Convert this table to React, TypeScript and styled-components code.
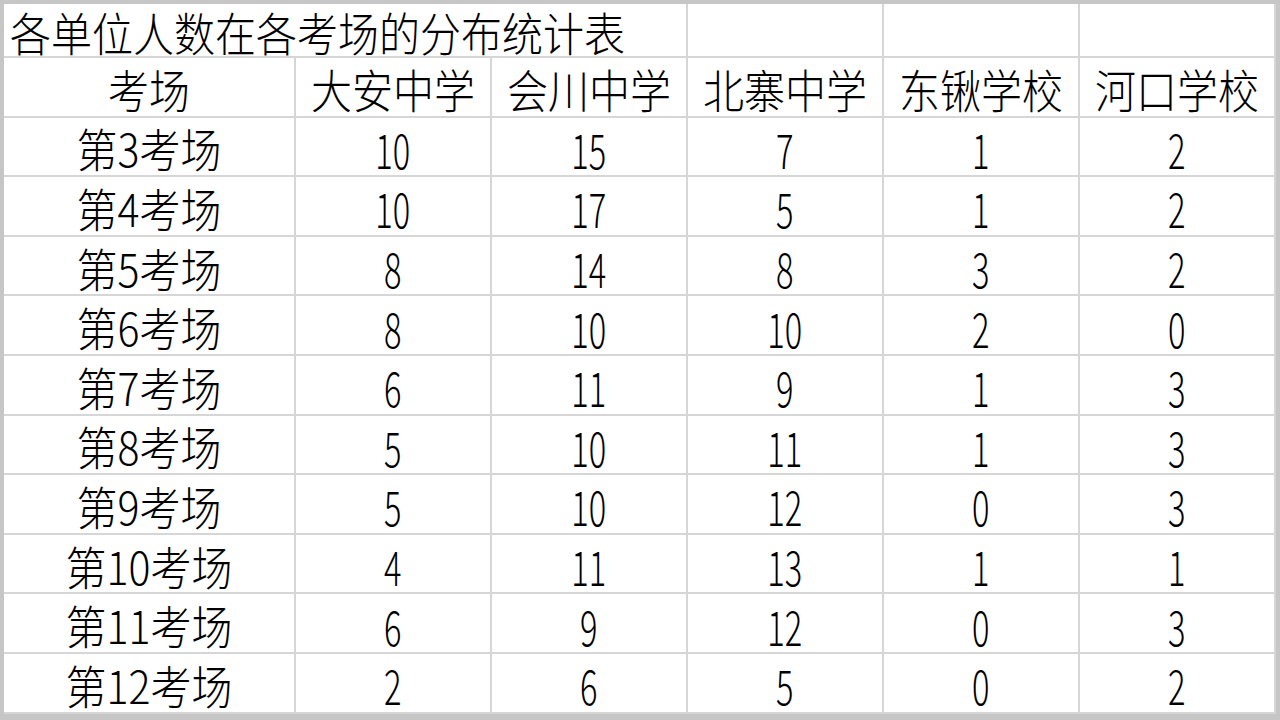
import React from 'react'
import styled, { createGlobalStyle } from 'styled-components'

const GlobalStyle = createGlobalStyle`
  html, body {
    margin: 0;
    padding: 0;
    background: #c6c6c6;
  }
  * {
    box-sizing: border-box;
  }
`

const title = '各单位人数在各考场的分布统计表'
const schools = ['大安中学', '会川中学', '北寨中学', '东锹学校', '河口学校']

const rows: [string, number[]][] = [
  ['第3考场', [10, 15, 7, 1, 2]],
  ['第4考场', [10, 17, 5, 1, 2]],
  ['第5考场', [8, 14, 8, 3, 2]],
  ['第6考场', [8, 10, 10, 2, 0]],
  ['第7考场', [6, 11, 9, 1, 3]],
  ['第8考场', [5, 10, 11, 1, 3]],
  ['第9考场', [5, 10, 12, 0, 3]],
  ['第10考场', [4, 11, 13, 1, 1]],
  ['第11考场', [6, 9, 12, 0, 3]],
  ['第12考场', [2, 6, 5, 0, 2]],
]

const App: React.FC = () => {
  return (
    <>
      <GlobalStyle />
      <Page>
        <Sheet>
          <TitleCell>
            <Label>{title}</Label>
          </TitleCell>
          <Cell />
          <Cell />
          <Cell />

          <Cell>
            <Label>考场</Label>
          </Cell>
          {schools.map((s) => (
            <Cell key={s}>
              <Label>{s}</Label>
            </Cell>
          ))}

          {rows.map(([room, counts]) => (
            <React.Fragment key={room}>
              <Cell>
                <Label>{room}</Label>
              </Cell>
              {counts.map((n, i) => (
                <Cell key={i}>
                  <Num>{n}</Num>
                </Cell>
              ))}
            </React.Fragment>
          ))}
        </Sheet>
      </Page>
    </>
  )
}

export default App

const Page = styled.div`
  width: 1280px;
  height: 720px;
  padding: 4px 0 0 4px;
  background: #c6c6c6;
  overflow: hidden;
`

const Sheet = styled.div`
  display: grid;
  grid-template-columns: 290px repeat(5, 194px);
  grid-template-rows: 52px repeat(11, 57.6px);
  gap: 2px;
  width: max-content;
  padding: 0 2px 2px 0;
  background: #d6d6d6;
`

const Cell = styled.div`
  background: #fff;
  display: flex;
  align-items: center;
  justify-content: center;
  white-space: nowrap;
  color: #000;
  font-family: "Noto Sans CJK SC", "Noto Sans", sans-serif;
  font-weight: 300;
`

const TitleCell = styled(Cell)`
  grid-column: 1 / span 3;
  justify-content: flex-start;
  padding-left: 6px;
`

const Label = styled.span`
  display: inline-block;
  font-size: 41px;
  line-height: 1;
  padding-top: 3px;
  transform: scaleY(1.12);
`

const Num = styled.span`
  display: inline-block;
  font-size: 48px;
  line-height: 1;
  padding-top: 3px;
  transform: scaleX(0.68);
`
